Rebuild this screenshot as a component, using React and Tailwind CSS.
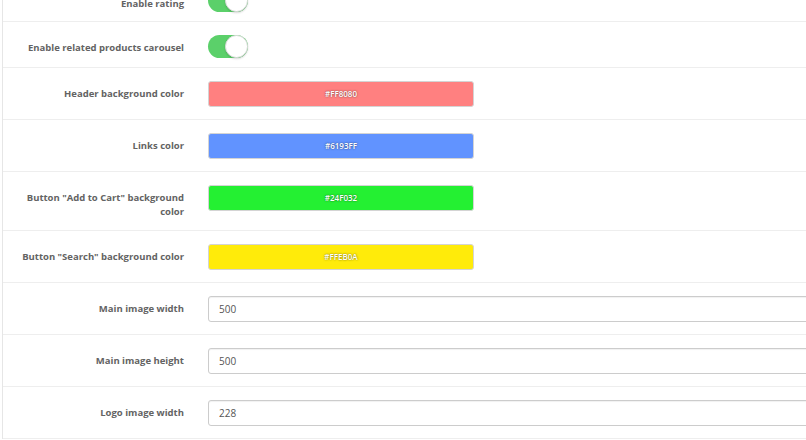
import React from 'react';

const rows = [
  { label: 'Enable rating', type: 'toggle', first: true },
  { label: 'Enable related products carousel', type: 'toggle' },
  { label: 'Header background color', type: 'color', value: '#FF8080', bg: 'bg-[#ff8080]' },
  { label: 'Links color', type: 'color', value: '#6193FF', bg: 'bg-[#6193ff]' },
  { label: 'Button "Add to Cart" background color', type: 'color', value: '#24F032', bg: 'bg-[#24f032]' },
  { label: 'Button "Search" background color', type: 'color', value: '#FFEB0A', bg: 'bg-[#ffeb0a]' },
  { label: 'Main image width', type: 'input', value: '500' },
  { label: 'Main image height', type: 'input', value: '500' },
  { label: 'Logo image width', type: 'input', value: '228' },
];

const Toggle = () => (
  <div className="relative w-[40px] h-[23px] rounded-full bg-[#5bd06a]">
    <div className="absolute right-0 top-0 w-[23px] h-[23px] rounded-full bg-white border border-[#dcdcdc] shadow-[0_1px_2px_rgba(0,0,0,0.15)]" />
  </div>
);

const App = () => {
  return (
    <div className="w-[806px] h-[440px] overflow-hidden bg-white font-['Open_Sans',sans-serif]">
      <div className="w-[1000px] ml-[2px] -mt-[24px] border-l border-[#e6e6e6]">
        {rows.map((row) => (
          <div
            key={row.label}
            className={
              row.type === 'toggle'
                ? 'flex items-start gap-[24px] h-[46px] pt-[13px] border-b border-[#eeeeee]'
                : 'flex items-start gap-[24px] pt-[13px] pb-[12px] border-b border-[#eeeeee]'
            }
          >
            <div
              className={
                row.first
                  ? 'w-[181px] shrink-0 pl-[12px] pt-[8px] text-right text-[9.5px] leading-[13.5px] font-bold text-[#636363]'
                  : 'w-[181px] shrink-0 pl-[12px] pt-[6px] text-right text-[9.5px] leading-[13.5px] font-bold text-[#636363]'
              }
            >
              {row.label}
            </div>
            {row.type === 'toggle' && <Toggle />}
            {row.type === 'color' && (
              <div
                className={`${row.bg} w-[266px] h-[26px] rounded-[3px] border border-[#d4d4d4] flex items-center justify-center text-[8px] font-semibold text-white [text-shadow:0_0_2px_rgba(0,0,0,0.6)]`}
              >
                {row.value}
              </div>
            )}
            {row.type === 'input' && (
              <input
                readOnly
                value={row.value}
                className="w-[700px] h-[26px] rounded-[3px] border border-[#cccccc] pl-[10px] text-[10px] text-[#555555] shadow-[inset_0_1px_1px_rgba(0,0,0,0.06)] outline-none"
              />
            )}
          </div>
        ))}
      </div>
    </div>
  );
};

export default App;
